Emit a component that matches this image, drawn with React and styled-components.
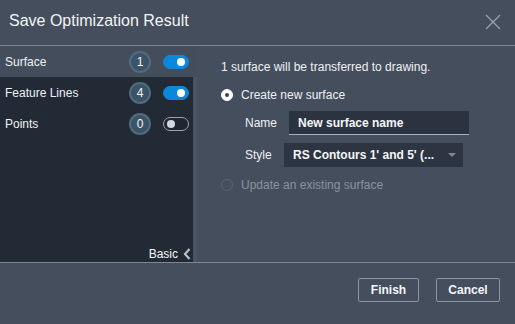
import React, { useState } from 'react';
import styled, { createGlobalStyle } from 'styled-components';

const GlobalStyle = createGlobalStyle`
	body {
		margin: 0;
		background: #444e5d;
		font-family: 'Liberation Sans', Arial, sans-serif;
	}
`;

const Dialog = styled.div`
	width: 515px;
	height: 324px;
	display: flex;
	flex-direction: column;
	background: #444e5d;
	color: #eef1f4;
	overflow: hidden;
`;

const Header = styled.div`
	height: 45px;
	flex: none;
	display: flex;
	align-items: center;
	justify-content: space-between;
	padding: 0 14px 0 9px;
	border-bottom: 1px solid #7d8692;
`;

const Title = styled.div`
	font-size: 16px;
	color: #f2f4f6;
	margin-top: -3px;
`;

const CloseButton = styled.button`
	background: none;
	border: none;
	padding: 0;
	width: 16px;
	height: 16px;
	display: flex;
	margin-top: -2px;
`;

const Body = styled.div`
	height: 216px;
	flex: none;
	display: flex;
	border-bottom: 1px solid #7d8692;
`;

const Sidebar = styled.div`
	width: 193px;
	background: #222a36;
	border-right: 4px solid #4a5463;
	display: flex;
	flex-direction: column;
`;

const Row = styled.div`
	height: 31px;
	display: flex;
	align-items: center;
	padding-left: 5px;
	background: ${(p) => (p.selected ? '#434d5b' : 'transparent')};
	margin-right: ${(p) => (p.selected ? '-4px' : '0')};
	padding-right: ${(p) => (p.selected ? '8px' : '4px')};
	font-size: 12px;
`;

const RowLabel = styled.div`
	flex: 1;
	color: #eef1f4;
`;

const Badge = styled.div`
	width: 18px;
	height: 18px;
	border-radius: 50%;
	background: #3b5467;
	border: 2px solid #4f6c80;
	display: flex;
	align-items: center;
	justify-content: center;
	font-size: 12px;
	color: #f4f6f8;
	margin-right: 12px;
`;

const Toggle = styled.div`
	width: 26px;
	height: 14px;
	border-radius: 8px;
	box-sizing: border-box;
	background: ${(p) => (p.on ? '#0b88dc' : '#1f2631')};
	border: 1px solid ${(p) => (p.on ? '#0b88dc' : '#9aa2ad')};
	position: relative;
	&::after {
		content: '';
		position: absolute;
		top: 2px;
		left: ${(p) => (p.on ? '13px' : '3px')};
		width: 8px;
		height: 8px;
		border-radius: 50%;
		background: ${(p) => (p.on ? '#ffffff' : '#d3d8e0')};
	}
`;

const Spacer = styled.div`
	flex: 1;
`;

const BasicLink = styled.div`
	display: flex;
	align-items: center;
	justify-content: flex-end;
	gap: 5px;
	padding: 0 2px 1px 0;
	font-size: 12px;
	color: #f4f6f8;
`;

const Content = styled.div`
	flex: 1;
	padding: 14px 0 0 24px;
	display: flex;
	flex-direction: column;
	font-size: 12px;
`;

const Info = styled.div`
	height: 14px;
	margin-bottom: 13px;
	color: #eef1f4;
`;

const RadioLine = styled.div`
	display: flex;
	align-items: center;
	gap: 8px;
	height: 16px;
	color: ${(p) => (p.disabled ? '#8b939f' : '#eef1f4')};
`;

const Radio = styled.span`
	width: 12px;
	height: 12px;
	border-radius: 50%;
	box-sizing: border-box;
	background: ${(p) => (p.checked ? '#ffffff' : 'transparent')};
	border: 1px solid ${(p) => (p.checked ? '#ffffff' : '#5a6472')};
	display: flex;
	align-items: center;
	justify-content: center;
	&::after {
		content: '';
		width: 4px;
		height: 4px;
		border-radius: 50%;
		background: ${(p) => (p.checked ? '#3a4350' : 'transparent')};
	}
`;

const FieldGrid = styled.div`
	display: grid;
	grid-template-columns: 44px auto;
	row-gap: 8px;
	align-items: center;
	padding: 8px 0 10px 24px;
`;

const FieldLabel = styled.div`
	color: #eef1f4;
	font-size: 12px;
`;

const TextInput = styled.div`
	width: 180px;
	height: 24px;
	box-sizing: border-box;
	background: #2b3341;
	border-bottom: 1px solid #aab2bd;
	display: flex;
	align-items: center;
	padding-left: 9px;
	font-weight: bold;
	font-size: 12px;
	color: #f4f6f8;
`;

const Select = styled.div`
	width: 179px;
	height: 24px;
	box-sizing: border-box;
	background: #2d3543;
	display: flex;
	align-items: center;
	justify-content: space-between;
	padding: 0 7px 0 9px;
	margin-left: -5px;
	font-weight: bold;
	font-size: 12px;
	color: #f4f6f8;
`;

const Caret = styled.span`
	width: 0;
	height: 0;
	border-left: 4px solid transparent;
	border-right: 4px solid transparent;
	border-top: 4px solid #7d8692;
`;

const Footer = styled.div`
	flex: 1;
	display: flex;
	justify-content: flex-end;
	align-items: flex-start;
	gap: 17px;
	padding: 15px 15px 0 0;
`;

const Button = styled.button`
	height: 24px;
	min-width: ${(p) => p.w}px;
	background: transparent;
	border: 1px solid #8c95a1;
	border-radius: 2px;
	color: #f4f6f8;
	font-family: 'Liberation Sans', Arial, sans-serif;
	font-weight: bold;
	font-size: 12px;
	padding: 0;
`;

const items = [
	{ label: 'Surface', count: 1, on: true },
	{ label: 'Feature Lines', count: 4, on: true },
	{ label: 'Points', count: 0, on: false },
];

export default function App() {
	const [selected] = useState(0);

	return (
		<>
			<GlobalStyle />
			<Dialog>
				<Header>
					<Title>Save Optimization Result</Title>
					<CloseButton aria-label='close'>
						<svg width='16' height='16' viewBox='0 0 16 16'>
							<path d='M1 1 L15 15 M15 1 L1 15' stroke='#9aa2ad' strokeWidth='1.3' />
						</svg>
					</CloseButton>
				</Header>
				<Body>
					<Sidebar>
						{items.map((it, i) => (
							<Row key={it.label} selected={i === selected}>
								<RowLabel>{it.label}</RowLabel>
								<Badge>{it.count}</Badge>
								<Toggle on={it.on} />
							</Row>
						))}
						<Spacer />
						<BasicLink>
							Basic
							<svg width='8' height='12' viewBox='0 0 8 12'>
								<path d='M6.5 1 L2 6 L6.5 11' stroke='#b9c0c9' strokeWidth='2.2' fill='none' />
							</svg>
						</BasicLink>
					</Sidebar>
					<Content>
						<Info>1 surface will be transferred to drawing.</Info>
						<RadioLine>
							<Radio checked />
							Create new surface
						</RadioLine>
						<FieldGrid>
							<FieldLabel>Name</FieldLabel>
							<TextInput>New surface name</TextInput>
							<FieldLabel>Style</FieldLabel>
							<Select>
								RS Contours 1' and 5' (...
								<Caret />
							</Select>
						</FieldGrid>
						<RadioLine disabled>
							<Radio />
							Update an existing surface
						</RadioLine>
					</Content>
				</Body>
				<Footer>
					<Button w={61}>Finish</Button>
					<Button w={64}>Cancel</Button>
				</Footer>
			</Dialog>
		</>
	);
}
